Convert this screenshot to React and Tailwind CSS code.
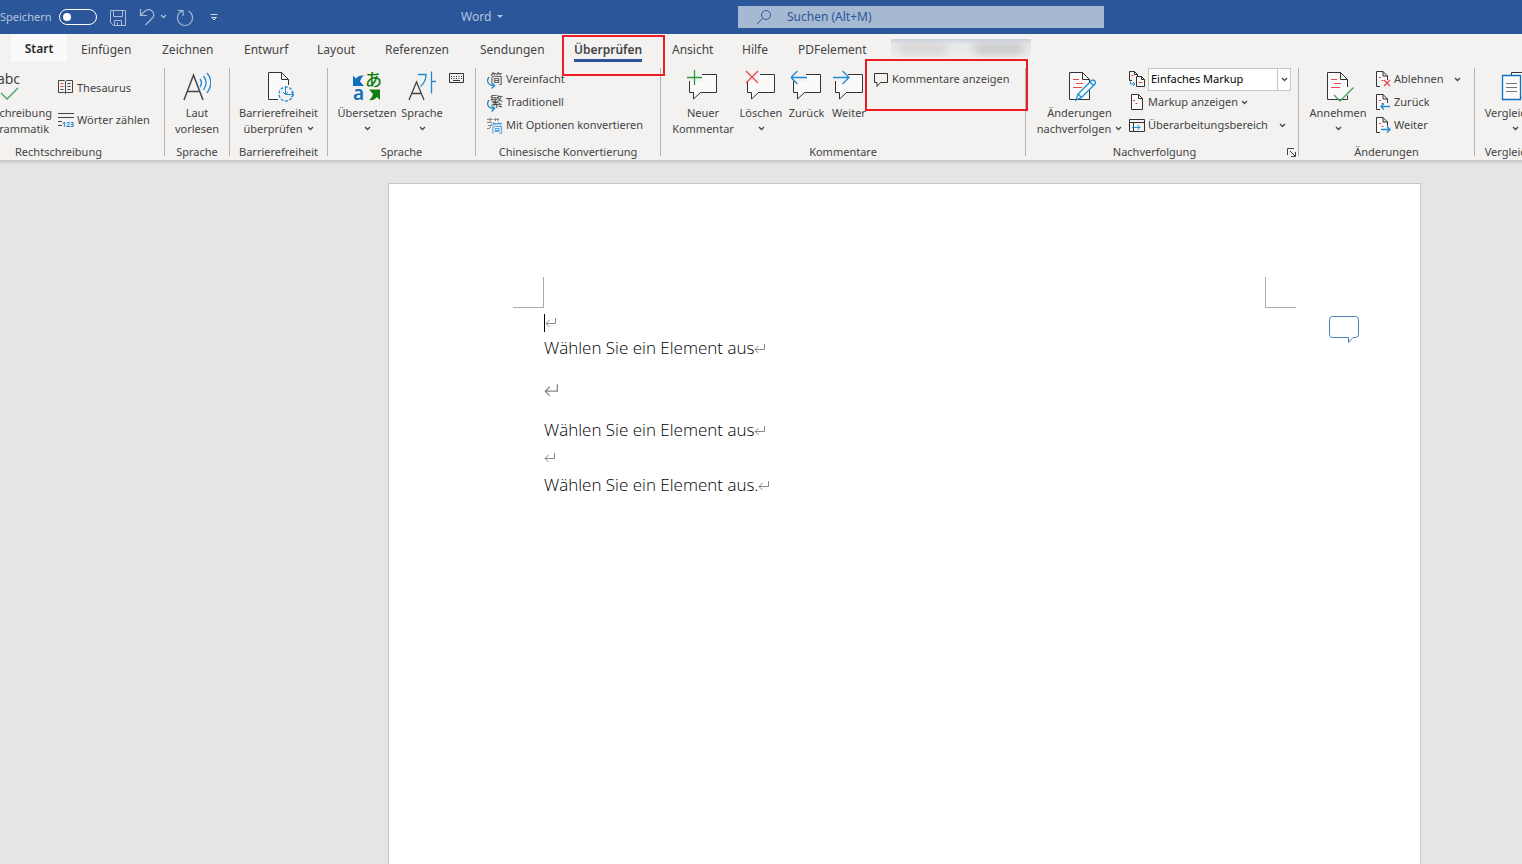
import React from 'react';

const tabs = [
  { label: 'Einfügen', width: 'w-[81px]' },
  { label: 'Zeichnen', width: 'w-[82px]' },
  { label: 'Entwurf', width: 'w-[73px]' },
  { label: 'Layout', width: 'w-[68px]' },
  { label: 'Referenzen', width: 'w-[95px]' },
  { label: 'Sendungen', width: 'w-[94px]' },
  { label: 'Überprüfen', width: 'w-[98px]', active: true },
  { label: 'Ansicht', width: 'w-[70px]' },
  { label: 'Hilfe', width: 'w-[56px]' },
  { label: 'PDFelement', width: 'w-[107px]' },
];

const App = () => (
  <div className="flex min-h-screen flex-col overflow-hidden bg-[#e5e5e5] font-['Noto_Sans',sans-serif] text-xs text-[#444]">
    <TitleBar />
    <TabBar />
    <Ribbon />
    <Document />
  </div>
);

// --- TITLE BAR ---

const TitleBar = () => (
  <header className="flex h-[34px] items-center bg-[#2b579a] text-[#b4c4dc]">
    <div className="flex w-[461px] shrink-0 items-center">
      <label htmlFor="autosave" className="w-[59px] text-[11px]">Speichern</label>
      <span className="relative flex">
        <input
          id="autosave"
          type="checkbox"
          className="h-4 w-[38px] appearance-none rounded-full border border-white"
        />
        <span className="pointer-events-none absolute top-1 left-1 h-2 w-2 rounded-full bg-white" />
      </span>
      <button aria-label="Speichern" className="ml-3 pt-px">
        <Svg w={18} h={18} stroke="#a9bbd6">
          <path d="M1.500 1.500h15v15h-12l-3-3zM4.500 1.500v6h9v-6M5.500 16.500v-5h7v5M8.500 13.500v3" />
        </Svg>
      </button>
      <button aria-label="Rückgängig" className="ml-3 flex items-center">
        <Svg w={18} h={18} stroke="#a9bbd6">
          <path d="M1.500 1v6.500h6.500M1.500 7.500L6 3c3-2.500 6.500-1.500 8 1s.5 5-1 6.500L6.500 17" strokeWidth="1.200" />
        </Svg>
        <Chevron className="ml-[3px] text-[#a9bbd6]" />
      </button>
      <button aria-label="Wiederholen" className="ml-[9px] pt-px">
        <Svg w={18} h={18} stroke="#a9bbd6">
          <path d="M1.500 1.500h5.500v5.500M6.500 2C3 3 1.500 6 1.500 9c0 4.500 3.500 7.500 7.500 7.500s7.500-3 7.500-7.500c0-3-1.500-5.500-4-7" strokeWidth="1.200" />
        </Svg>
      </button>
      <button aria-label="Symbolleiste anpassen" className="ml-4">
        <Svg w={8} h={8} stroke="#d0d9e8">
          <path d="M.5 1.500h7M1.500 4.500h5l-2.500 2.500z" />
        </Svg>
      </button>
    </div>
    <button className="flex w-[277px] shrink-0 items-center gap-[6px]">
      Word
      <Svg w={6} h={4} stroke="none">
        <path d="M0 0h6l-3 3z" fill="#b4c4dc" />
      </Svg>
    </button>
    <div className="flex h-[22px] w-[366px] items-center bg-[#a6b9d3] pl-[18px]">
      <Svg w={16} h={16} stroke="#2b579a">
        <circle cx="10" cy="6" r="4.500" />
        <path d="M6.500 9.500L1 15" />
      </Svg>
      <input
        aria-label="Suchen"
        placeholder="Suchen (Alt+M)"
        className="ml-[15px] min-w-0 flex-1 bg-transparent outline-none placeholder:text-[#2b579a] placeholder:opacity-100"
      />
    </div>
  </header>
);

// --- TABS ---

const TabBar = () => (
  <nav className="flex h-7 bg-[#f3f2f1] pl-[11px]">
    <button className="w-14 shrink-0 bg-[#fbfafa] pt-[2px] font-semibold text-[#262626]">Start</button>
    {tabs.map((tab) => (
      <div key={tab.label} className={`relative shrink-0 pt-[6px] pl-[14px] ${tab.width}`}>
        <button className={tab.active ? 'block h-[22px] border-b-3 border-[#2b579a] text-left leading-5 font-semibold' : 'block leading-5'}>
          {tab.label}
        </button>
        {tab.active && (
          <span className="pointer-events-none absolute top-px left-[2px] z-10 h-[41px] w-[103px] border-2 border-[#ed1c24]" />
        )}
      </div>
    ))}
    <div className="mt-[5px] flex h-[19px] w-[140px] shrink-0 items-center justify-between overflow-hidden bg-linear-to-b from-[#c8d1de] via-[#e6e7e8] via-25% to-[#f0efee] px-2">
      <span className="h-2 w-12 bg-[#cfcecd] blur-[5px]" />
      <span className="h-2 w-12 bg-[#bdbcbb] blur-[5px]" />
    </div>
  </nav>
);

// --- RIBBON ---

const Ribbon = () => (
  <section className="-ml-[47px] flex h-[98px] w-max min-w-[calc(100%+47px)] bg-[#f3f2f1] text-[11px] shadow-[0_3px_3px_-1px_#c4c4c4]">
    <Group label="Rechtschreibung" width="w-[212px]" pad="pl-[11px]">
      <BigButton width="w-[89px]" lines={['Rechtschreibung', 'und Grammatik']} icon={<SpellIcon />} />
      <div className="ml-[5px] flex flex-col pt-1">
        <SmallButton label="Thesaurus" icon={<BookIcon />} tall />
        <SmallButton label="Wörter zählen" icon={<CountIcon />} tall />
      </div>
    </Group>
    <Group label="Sprache" width="w-[65px]">
      <BigButton width="w-16" lines={['Laut', 'vorlesen']} icon={<ReadAloudIcon />} />
    </Group>
    <Group label="Barrierefreiheit" width="w-[98px]">
      <BigButton width="w-[97px]" lines={['Barrierefreiheit', 'überprüfen']} icon={<AccessIcon />} menu />
    </Group>
    <Group label="Sprache" width="w-[148px]" pad="pl-[7px]">
      <BigButton width="w-16" lines={['Übersetzen']} icon={<TranslateIcon />} menu />
      <BigButton width="w-[46px]" lines={['Sprache']} icon={<LanguageIcon />} menu />
      <button aria-label="Tastatur" className="mt-[5px] ml-1 self-start">
        <Svg w={15} h={10} stroke="#333">
          <path d="M.5.5h14v9H.5zM2 3.500h1M4.500 3.500h1M7 3.500h1M9.500 3.500h1M12 3.500h1M2 5.500h1M4.500 5.500h1M7 5.500h1M9.500 5.500h1M12 5.500h1M4 7.500h7" />
        </Svg>
      </button>
    </Group>
    <Group label="Chinesische Konvertierung" width="w-[185px]" pad="pl-[11px]">
      <div className="flex flex-col">
        <SmallButton label="Vereinfacht" icon={<ChineseIcon char="简" />} />
        <SmallButton label="Traditionell" icon={<ChineseIcon char="繁" />} />
        <SmallButton label="Mit Optionen konvertieren" icon={<ChineseOptionsIcon />} />
      </div>
    </Group>
    <Group label="Kommentare" width="w-[365px]" pad="pl-[7px]">
      <BigButton width="w-[70px]" lines={['Neuer', 'Kommentar']} icon={<CommentIcon mark="M0 7.500h15M7.500 0v15" color="#2e9a4a" />} />
      <BigButton width="w-[46px]" lines={['Löschen']} icon={<CommentIcon mark="M1 1l12 12M13 1L1 13" color="#e8474c" />} menu />
      <BigButton width="w-[45px]" lines={['Zurück']} icon={<CommentIcon mark="M0 7.500h16M6.500 1L0 7.500L6.500 14" color="#1e8bd1" />} />
      <BigButton width="w-10" lines={['Weiter']} icon={<CommentIcon mark="M0 7.500h16M9.500 1L16 7.500L9.500 14" color="#1e8bd1" />} />
      <div className="relative ml-1 flex flex-col">
        <SmallButton
          label="Kommentare anzeigen"
          icon={
            <Svg w={16} h={16} stroke="#333">
              <path d="M1.500 1.500h13v9h-7l-3.500 4v-4h-2.500z" />
            </Svg>
          }
        />
        <span className="pointer-events-none absolute -top-[9px] -left-2 z-10 h-[52px] w-[163px] border-2 border-[#ed1c24]" />
      </div>
    </Group>
    <Group label="Nachverfolgung" width="w-[273px]" pad="pl-[7px]" launcher>
      <BigButton width="w-[93px]" lines={['Änderungen', 'nachverfolgen']} icon={<TrackIcon />} menu />
      <div className="ml-[3px] flex flex-col">
        <div className="flex h-[23px] items-center gap-[3px]">
          <MarkupModeIcon />
          <span className="relative flex">
            <select
              aria-label="Markup-Anzeige"
              className="h-[23px] w-[143px] appearance-none border border-[#c6c6c6] bg-white pl-[2px] text-black"
            >
              <option>Einfaches Markup</option>
            </select>
            <span className="pointer-events-none absolute inset-y-0 right-0 flex w-[14px] items-center justify-center border-l border-[#c6c6c6]">
              <Chevron />
            </span>
          </span>
        </div>
        <SmallButton label="Markup anzeigen" icon={<PageIcon />} menu />
        <SmallButton
          label="Überarbeitungsbereich"
          icon={
            <Svg w={16} h={16} stroke="#333">
              <path d="M.5 1.500h15v12H.5zM.5 4.500h15M4.500 4.500v9" />
              <path d="M3 9.500h8M8.500 7L11 9.500L8.500 12" stroke="#1e8bd1" />
            </Svg>
          }
          menu
          wide
        />
      </div>
    </Group>
    <Group label="Änderungen" width="w-[176px]" pad="pl-[6px]">
      <BigButton width="w-[66px]" lines={['Annehmen']} icon={<AcceptIcon />} menu />
      <div className="ml-1 flex flex-col">
        <SmallButton label="Ablehnen" icon={<PageIcon mark="M9 9l6 6M15 9l-6 6" color="#e8474c" />} menu wide />
        <SmallButton label="Zurück" icon={<PageIcon mark="M6 12.500h9M9 9.500l-3 3l3 3" color="#1e8bd1" />} />
        <SmallButton label="Weiter" icon={<PageIcon mark="M6 12.500h9M12 9.500l3 3l-3 3" color="#1e8bd1" />} />
      </div>
    </Group>
    <Group label="Vergleichen" width="w-20" last>
      <BigButton width="w-20" lines={['Vergleichen']} icon={<CompareIcon />} menu />
    </Group>
  </section>
);

const Group = ({ label, width, pad = '', launcher, last, children }) => (
  <div className={`flex shrink-0 pt-[6px] ${width}`}>
    <div className="flex min-w-0 flex-1 flex-col">
      <div className={`flex h-[76px] whitespace-nowrap ${pad}`}>{children}</div>
      <div className="flex h-4 items-center">
        <span className="flex-1 text-center leading-4 whitespace-nowrap">{label}</span>
        {launcher && (
          <button aria-label="Optionen" className="mr-[2px] ml-1">
            <Svg w={9} h={9} stroke="#444">
              <path d="M.5 7V.5H7M3 3l5 5M8.500 4v4.500H4" />
            </Svg>
          </button>
        )}
      </div>
    </div>
    {!last && <div className="h-[88px] w-px bg-[#b5b4b3]" />}
  </div>
);

const BigButton = ({ width, lines, icon, menu }) => (
  <button className={`flex shrink-0 flex-col items-center pt-[2px] leading-4 ${width}`}>
    <span className="mb-[3px] flex h-8 items-center justify-center">{icon}</span>
    <span>{lines[0]}</span>
    <span className="flex h-4 items-center gap-1">
      {lines[1]}
      {menu && <Chevron />}
    </span>
  </button>
);

const SmallButton = ({ label, icon, menu, wide, tall }) => (
  <button className={`flex items-center gap-[3px] text-left ${tall ? 'h-8' : 'h-[23px]'}`}>
    {icon}
    {label}
    {menu && <Chevron className={wide ? 'ml-2' : ''} />}
  </button>
);

// --- ICONS ---

const Svg = ({ x = 0, w, h, stroke, className = '', children }) => (
  <svg width={w} height={h} viewBox={`${x} 0 ${w} ${h}`} fill="none" stroke={stroke} className={`shrink-0 ${className}`} aria-hidden="true">
    {children}
  </svg>
);

const Chevron = ({ className = '' }) => (
  <Svg w={7} h={6} stroke="currentColor" className={className}>
    <path d="M1 1l2.500 2.500L6 1" strokeWidth="1.300" />
  </Svg>
);

const SpellIcon = () => (
  <span className="flex flex-col items-center">
    <span className="text-sm leading-4">abc</span>
    <Svg w={20} h={14} stroke="#3fa35b">
      <path d="M2 6l6 6L19 1" strokeWidth="1.300" />
    </Svg>
  </span>
);

const BookIcon = () => (
  <Svg w={16} h={18} stroke="#444">
    <path d="M7.500 2.500l-1-1h-6v12h6l1 1l1-1h6v-12h-6zM7.500 2.500v12M9.500 4.500h3M9.500 7.500h3M9.500 10.500h3M2.500 10.500h3" />
    <path d="M2.500 4.500h3M2.500 7.500h3" stroke="#e8474c" />
  </Svg>
);

const CountIcon = () => (
  <Svg w={16} h={16} stroke="#444">
    <path d="M0 1.500h16M0 5.500h16M0 9.500h4M0 13.500h4" />
    <text x="4" y="15" fontSize="7" fontWeight="700" fill="#1e8bd1" stroke="none">123</text>
  </Svg>
);

const ReadAloudIcon = () => (
  <Svg w={28} h={32} stroke="#444">
    <path d="M1 30L10.500 5L20 30M4.500 21.500h12" strokeWidth="1.500" />
    <path d="M17 9c2 2.500 2 5 0 8M20.500 6c3.500 4.500 3.500 9 0 14M24 3c5 6 5 13 0 20" stroke="#1e8bd1" strokeWidth="1.300" />
  </Svg>
);

const AccessIcon = () => (
  <Svg x={-4} w={32} h={32} stroke="#333">
    <path d="M11 29.500H1.500v-27h13l7 7V15M14.500 2.500v7h7" fill="#fafafa" />
    <circle cx="19" cy="24" r="7" stroke="#1e8bd1" strokeDasharray="3 1.500" strokeWidth="1.300" />
    <path d="M18.500 16v8.500h8M24 22l3 2.500L24 27M16 22l2.500 2.500L21 22" stroke="#1e8bd1" />
  </Svg>
);

const TranslateIcon = () => (
  <Svg w={30} h={32} stroke="none">
    <path d="M1 5.500l3 3C6 6 8 5 12 5.500c-2 1-3 3-4 6l4 4.500H1z" fill="#106ebe" />
    <text x="1" y="30" fontSize="19" fontWeight="600" fill="#106ebe">a</text>
    <text x="13" y="16" fontSize="17" fontWeight="500" fill="#107c10" fontFamily="Noto Sans CJK JP">あ</text>
    <path d="M17 19.500h11V30l-3-3c-2 2.500-4 3.500-8 3c2-1 3-3 4-6z" fill="#107c10" />
  </Svg>
);

const LanguageIcon = () => (
  <Svg w={28} h={32} stroke="#444">
    <path d="M1 30L8.500 12L16 30M4 23.500h9.500" strokeWidth="1.300" />
    <path d="M10 4.500h8c0 6-2 9-5.500 12M23.500 1.500v22M23.500 11.500H28" stroke="#1e8bd1" strokeWidth="1.300" />
  </Svg>
);

const ChineseIcon = ({ char }) => (
  <Svg w={16} h={18} stroke="none">
    <text x="3" y="12" fontSize="13" fill="#444" fontFamily="Noto Sans CJK SC">{char}</text>
    <path d="M2 6C-1 10 1 14.500 7 14.500M4.500 11.500l3 3l-3 3" stroke="#f3f2f1" strokeWidth="3" />
    <path d="M2 6C-1 10 1 14.500 7 14.500M4.500 11.500l3 3l-3 3" stroke="#1e8bd1" strokeWidth="1.300" />
  </Svg>
);

const ChineseOptionsIcon = () => (
  <Svg w={16} h={18} stroke="none">
    <path d="M0 2.500h6M3 .5v5M0 5.500h5M1 8.500h3M0 11.500h2M7 2.500h5M8.500 1v3M11 1v3M5 7l-3 5" stroke="#888" />
    <text x="4" y="16" fontSize="12" fill="#3a96dd" fontFamily="Noto Sans CJK SC">简</text>
  </Svg>
);

const CommentIcon = ({ mark, color }) => (
  <Svg w={32} h={32} stroke="#333">
    <path d="M2.500 4.500h27v18H13.500L6.500 29v-6.500h-4z" fill="#fafafa" />
    <path d="M0 0h15v11H0z" fill="#f3f2f1" stroke="none" />
    <path d={mark} stroke={color} strokeWidth="1.300" />
  </Svg>
);

const TrackIcon = () => (
  <Svg x={-4} w={32} h={32} stroke="#333">
    <path d="M1.500 2.500h13l7 7v20h-20z" fill="#fafafa" />
    <path d="M14.500 2.500v7h7" />
    <path d="M5 9.500h6M8 13.500h7M5 17.500h9" stroke="#e8474c" />
    <path d="M8 30l2-6L23.500 10.500c2-1.500 5 1 3.500 3.500L13.500 27.500zM10 24l3.500 3.500M22 12l3.500 3.500" fill="#f3f9fd" stroke="#1e8bd1" strokeWidth="1.300" />
  </Svg>
);

const AcceptIcon = () => (
  <Svg x={-4} w={32} h={32} stroke="#333">
    <path d="M21.500 17V9.500l-7-7h-13v27h20v-4M14.500 2.500v7h7" fill="#fafafa" />
    <path d="M5 9.500h6M8 13.500h7M5 17.500h9" stroke="#e8474c" />
    <path d="M8 25l6 6L27.500 17.500" stroke="#3fa35b" strokeWidth="1.300" />
  </Svg>
);

const CompareIcon = () => (
  <Svg w={28} h={32} stroke="#333">
    <path d="M10.500 6V2.500H21l6.500 6.500v18h-7" fill="#fafafa" />
    <path d="M1.500 5.500h18v24h-18z" fill="#fafafa" stroke="#106ebe" strokeWidth="1.300" />
    <path d="M5 13.500h11M5 17.500h11M5 21.500h11" stroke="#777" />
  </Svg>
);

const PageIcon = ({ mark, color }) => (
  <Svg w={16} h={18} stroke="#333">
    <path d={mark ? 'M5 15.500H1.500V.5H8l4.500 4.500v4M8 .5v4.500h4.500' : 'M2.500.5h7l4 4v11h-11zM9.500.5v4h4'} fill="#fafafa" />
    <path d="M4 6.500h2M6.500 9.500h2" stroke="#e8474c" />
    {mark && <path d={mark} stroke={color} strokeWidth="1.300" />}
  </Svg>
);

const MarkupModeIcon = () => (
  <Svg w={16} h={18} stroke="#333">
    <path d="M3 9.500H.5V.5h5L8.500 3.500V5M5.500.5v3h3" />
    <path d="M7.500 5.500h5l3 3v7h-8zM12.500 5.500v3h3" fill="#fafafa" />
    <path d="M2.500 4.500h2M9.500 11.500h4" stroke="#e8474c" />
    <path d="M1.500 10.500v2.500h4M4 11l2 2l-2 2" stroke="#1e8bd1" />
  </Svg>
);

const ReturnMark = ({ large }) => (
  <svg width={large ? 14 : 11} height={large ? 13 : 10} viewBox="0 0 11 10" fill="none" stroke="#888" className="shrink-0" aria-hidden="true">
    <path d="M10.500 0v5.500H1M4.500 2L1 5.500L4.500 9" />
  </svg>
);

// --- DOCUMENT ---

const Line = ({ text, height, large }) => (
  <p className={`flex items-center ${height}`}>
    {text}
    <ReturnMark large={large} />
  </p>
);

const Document = () => (
  <main className="mt-[23px] mr-[101px] ml-[388px] flex flex-1 flex-col border border-b-0 border-[#c6c6c6] bg-white pt-[93px] font-['Open_Sans',sans-serif] text-[17px] font-light text-black">
    <div className="flex justify-between px-[124px]">
      <span className="h-[31px] w-[31px] border-r border-b border-[#aaa]" />
      <span className="h-[31px] w-[31px] border-b border-l border-[#aaa]" />
    </div>
    <div className="flex justify-between pr-[61px] pl-[155px]">
      <div className="pt-1">
        <div className="flex h-[22px] items-center">
          <span className="h-[18px] w-px bg-black" />
          <ReturnMark />
        </div>
        <Line text="Wählen Sie ein Element aus" height="h-[29px]" />
        <Line height="h-[54px]" large />
        <Line text="Wählen Sie ein Element aus" height="h-[27px]" />
        <Line height="h-[27px]" />
        <Line text="Wählen Sie ein Element aus." height="h-[29px]" />
      </div>
      <button aria-label="Kommentar" className="mt-2 self-start">
        <Svg w={30} h={28} stroke="#4a7ebb">
          <path d="M3.500.5h23a3 3 0 0 1 3 3v15a3 3 0 0 1-3 3H24L19.500 26.500v-5h-16a3 3 0 0 1-3-3v-15a3 3 0 0 1 3-3z" />
        </Svg>
      </button>
    </div>
  </main>
);

export default App;
